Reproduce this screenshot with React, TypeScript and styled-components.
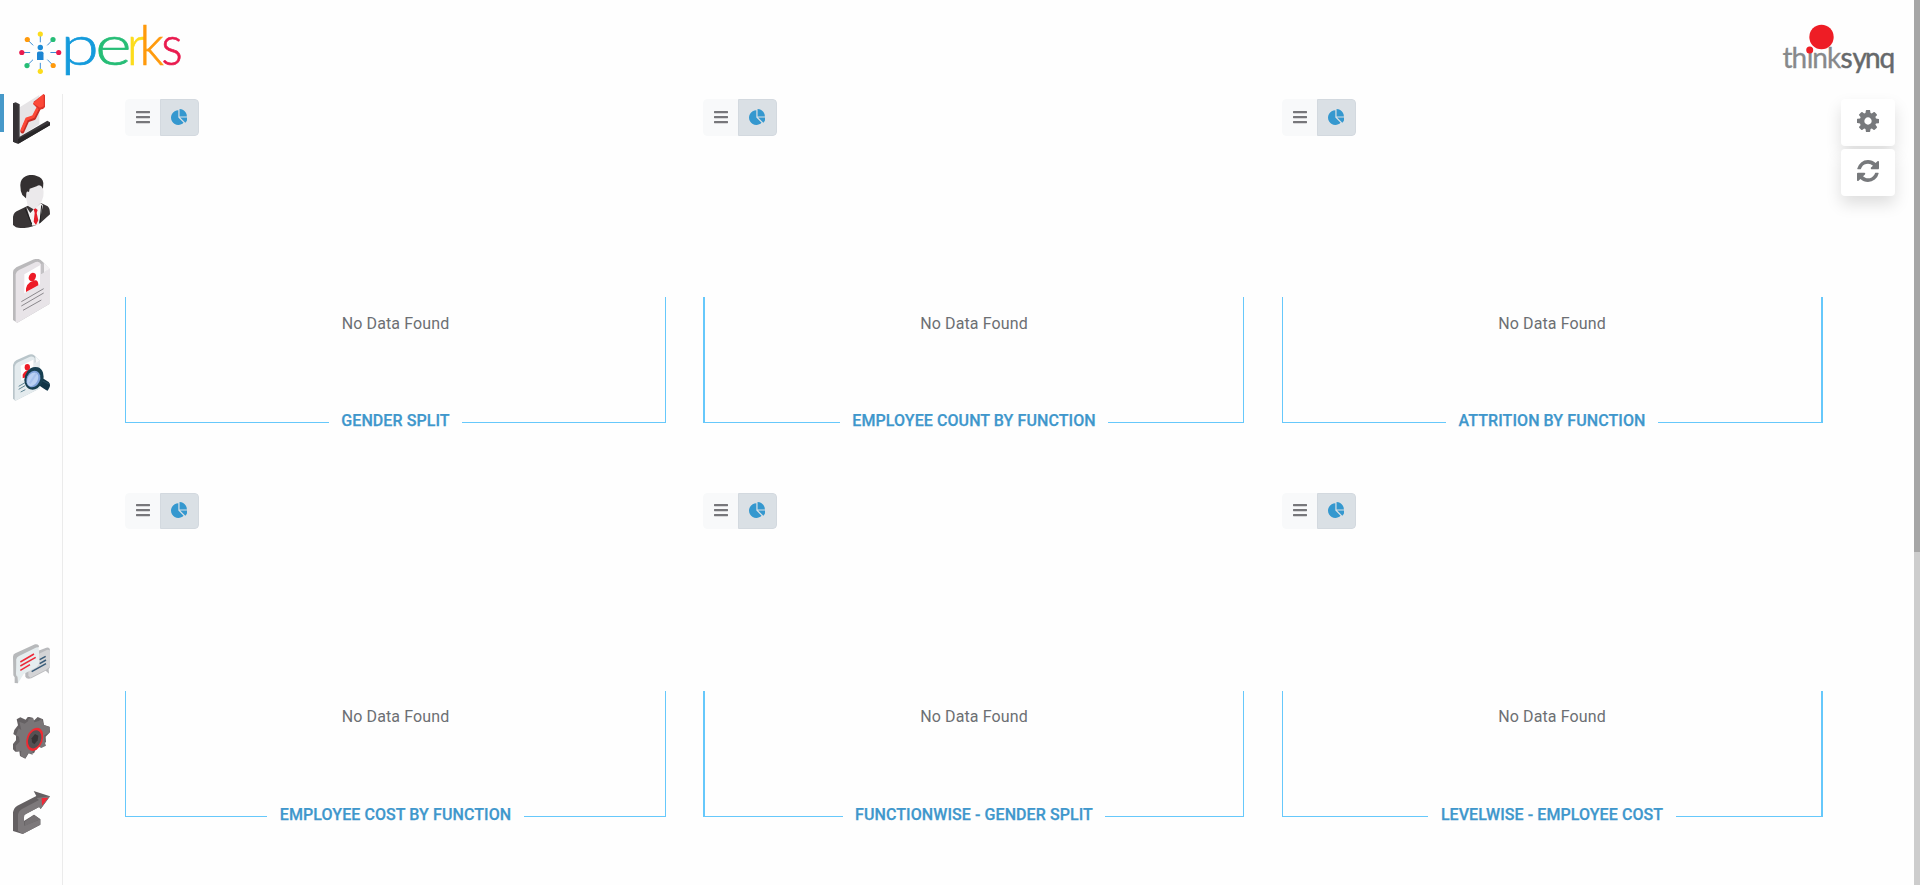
import React from 'react';
import styled, { createGlobalStyle } from 'styled-components';
import { FaBars } from 'react-icons/fa';

const GlobalStyle = createGlobalStyle`
  * { box-sizing: border-box; }
  body {
    margin: 0;
    background: #fefefe;
    font-family: Roboto, "Liberation Sans", sans-serif;
    font-size: 16px;
    color: #6c6f73;
    overflow: hidden;
  }
  svg { display: block; flex: none; }
`;

const Page = styled.div`
  display: flex;
  height: 885px;
`;

const Main = styled.div`
  flex: 1;
  display: flex;
  flex-direction: column;
  min-width: 0;
`;

const Header = styled.header`
  height: 94px;
  flex: none;
  display: flex;
  justify-content: space-between;
  padding: 0 16px;
`;

const Body = styled.div`
  flex: 1;
  display: flex;
  min-height: 0;
`;

const Sidebar = styled.nav`
  width: 63px;
  border-right: 1px solid #ebebeb;
  display: flex;
  flex-direction: column;
`;

const NavItem = styled.a<{ $gap: number; $active?: boolean }>`
  display: flex;
  gap: 9px;
  margin-top: ${(p) => p.$gap}px;
  padding-left: ${(p) => (p.$active ? 0 : 13)}px;
`;

const ActiveMark = styled.span`
  width: 4px;
  height: 38px;
  background: #4799c9;
`;

const Grid = styled.main`
  display: grid;
  grid-template-columns: 541px 542px 541px;
  grid-auto-rows: 324px;
  column-gap: 37px;
  row-gap: 70px;
  align-content: start;
  padding: 5px 0 0 62px;
`;

const Card = styled.section`
  width: 541px;
  display: flex;
  flex-direction: column;
`;

const Toggle = styled.div<{ $short?: boolean }>`
  display: flex;
  width: 74px;
  height: ${(p) => (p.$short ? 36 : 37)}px;
  margin-bottom: ${(p) => (p.$short ? 1 : 0)}px;
  border-radius: 4px;
  overflow: hidden;
`;

const ToggleButton = styled.button<{ $on?: boolean }>`
  display: flex;
  align-items: center;
  justify-content: center;
  flex: none;
  width: ${(p) => (p.$on ? 39 : 35)}px;
  padding: 0 ${(p) => (p.$on ? 1 : 0)}px 2px ${(p) => (p.$on ? 0 : 1)}px;
  border: 1px solid ${(p) => (p.$on ? '#d3d9df' : '#f8f9fa')};
  border-radius: ${(p) => (p.$on ? '0 4px 4px 0' : '4px 0 0 4px')};
  background: ${(p) => (p.$on ? '#dae0e5' : '#f8f9fa')};
  color: ${(p) => (p.$on ? '#3598cf' : '#77777b')};
  font-size: 16px;
`;

const Frame = styled.div<{ $left: number; $right: number }>`
  margin-top: 161px;
  height: 126px;
  display: flex;
  flex-direction: column;
  border: 0 solid #66c8fb;
  border-left-width: ${(p) => p.$left}px;
  border-right-width: ${(p) => p.$right}px;
`;

const Empty = styled.div<{ $raise?: boolean }>`
  padding-top: ${(p) => (p.$raise ? 16 : 17)}px;
  line-height: 20px;
  letter-spacing: 0.12px;
  text-align: center;
`;

const Title = styled.h2`
  margin: auto 0 -8px;
  height: 20px;
  display: flex;
  align-items: flex-start;
  gap: 12.5px;
  font-size: 16px;
  line-height: 20px;
  font-weight: 500;
  letter-spacing: 0.08px;
  -webkit-text-stroke: 0.25px #3f97cc;
  color: #3f97cc;
  text-transform: uppercase;
  white-space: nowrap;
  &::before,
  &::after {
    content: '';
    flex: 1;
    height: 1px;
    margin-top: 11px;
    background: #66c8fb;
  }
`;

const Tools = styled.div`
  margin-left: auto;
  padding: 5px 19px 0 0;
  display: flex;
  flex-direction: column;
  gap: 3px;
`;

const ToolButton = styled.button`
  width: 54px;
  height: 47px;
  padding: 0 0 3px;
  display: flex;
  align-items: center;
  justify-content: center;
  border: 0;
  border-radius: 4px;
  background: #fff;
  color: #77797c;
  box-shadow: 0 8px 16px rgba(0, 0, 0, 0.13);
`;

const ScrollTrack = styled.div`
  width: 6px;
  background: #cdcdcd;
`;

const ScrollThumb = styled.div`
  height: 552px;
  background: #a6a6a6;
`;

const PerksLetter = styled.text`
  font-family: Lato, sans-serif;
  font-weight: 300;
  font-size: 58px;
  stroke-width: 0.7px;
`;

const SynqText = styled.text<{ $strong?: boolean }>`
  font-family: Lato, sans-serif;
  font-size: 28px;
  font-weight: 400;
  fill: ${(p) => (p.$strong ? '#66696b' : '#87898b')};
  stroke: ${(p) => (p.$strong ? '#66696b' : '#87898b')};
  stroke-width: ${(p) => (p.$strong ? 0.5 : 0.3)}px;
`;

const spokes = [
  { x: 40.3, y: 34, c: '#fcdc1c' },
  { x: 53, y: 39.5, c: '#26bd76' },
  { x: 58.7, y: 52.5, c: '#e91a4e' },
  { x: 53.2, y: 65.5, c: '#ff9a0c' },
  { x: 40.3, y: 71.3, c: '#fcdc1c' },
  { x: 27, y: 65.6, c: '#26bd76' },
  { x: 21.8, y: 52.5, c: '#e91a4e' },
  { x: 27.3, y: 39.5, c: '#ff9a0c' },
];

const letters = [
  { ch: 'p', x: 60.4, sx: 1.2, c: '#159bdc' },
  { ch: 'e', x: 95.2, sx: 1.2, c: '#26bd76' },
  { ch: 'r', x: 126.5, sx: 0.95, c: '#fcdc1c' },
  { ch: 'k', x: 139.4, sx: 0.88, c: '#ff9a0c' },
  { ch: 's', x: 161.2, sx: 0.87, c: '#e91a4e' },
];

const PerksLogo = () => (
  <svg width="190" height="94" viewBox="16 0 190 94">
    {spokes.map((s, i) => (
      <g key={i}>
        <line
          x1={40.3 + (s.x - 40.3) * 0.55}
          y1={52.5 + (s.y - 52.5) * 0.55}
          x2={s.x}
          y2={s.y}
          stroke="#3d8fd6"
          strokeWidth="1"
        />
        <circle cx={s.x} cy={s.y} r="2.6" fill={s.c} />
      </g>
    ))}
    <circle cx="40.3" cy="47.5" r="2.7" fill="#1d8bd6" />
    <path d="M37 60V53.2q0-1.8 1.8-1.8h3q1.7 0 1.7 1.8V60z" fill="#1d86d3" />
    {letters.map((l) => (
      <PerksLetter key={l.ch} transform={`translate(${l.x} 65.3) scale(${l.sx} 0.96)`} fill={l.c} stroke={l.c}>
        {l.ch}
      </PerksLetter>
    ))}
  </svg>
);

const ThinksynqLogo = () => (
  <svg width="120" height="94" viewBox="1778 0 120 94">
    <SynqText y="68" x="1782.5 1791.5 1806.7 1812.3 1827">think</SynqText>
    <SynqText $strong y="68" x="1840.5 1852.5 1865 1879.5">synq</SynqText>
    <circle cx="1821.5" cy="37" r="12.2" fill="#ee1d25" />
    <circle cx="1809.7" cy="50" r="3.5" fill="#ee1d25" />
  </svg>
);

const PieIcon = () => (
  <svg width="16.5" height="16" viewBox="0 0 1728 1664" fill="currentColor">
    <path d="M768 890l546 546q-106 108-247.500 168T768 1664q-209 0-385.500-103T103 1281.500 0 896t103-385.500T382.500 231 768 128v762zm187 6h773q0 157-60 298.500T1500 1442zm709-128H896V0q209 0 385.500 103T1561 382.500 1664 768z" />
  </svg>
);

const CogIcon = () => (
  <svg width="22" height="22" viewBox="0 0 1536 1536" fill="currentColor">
    <path d="M1024 768q0-106-75-181t-181-75-181 75-75 181 75 181 181 75 181-75 75-181zm512-109v222q0 12-8 23t-20 13l-185 28q-19 54-39 91 35 50 107 138 10 12 10 25t-9 23q-27 37-99 108t-94 71q-12 0-26-9l-138-108q-44 23-91 38-16 136-29 186-7 28-36 28H657q-14 0-24.500-8.500T621 1506l-28-184q-49-16-90-37l-141 107q-10 9-25 9-14 0-25-11-126-114-165-168-7-10-7-23 0-12 8-23 15-21 51-66.500t54-70.500q-27-50-41-99L29 913q-13-2-21-12.500T0 877V655q0-12 8-23t19-13l186-28q14-46 39-92-40-57-107-138-10-12-10-24 0-10 9-23 26-36 98.500-107.500T337 135q13 0 26 10l138 107q44-23 91-38 16-136 29-186 7-28 36-28h222q14 0 24.500 8.500T915 30l28 184q49 16 90 37l142-107q9-9 24-9 13 0 25 10 129 119 165 170 7 8 7 22 0 12-8 23-15 21-51 66.500t-54 70.500q26 50 41 98l183 28q13 2 21 12.500t8 23.500z" />
  </svg>
);

const RefreshIcon = () => (
  <svg width="22" height="22" viewBox="0 0 1536 1536" fill="currentColor">
    <path d="M1511 928q0 5-1 7-64 268-268 434.500T764 1536q-146 0-282.500-55T238 1324l-129 129q-19 19-45 19t-45-19-19-45V960q0-26 19-45t45-19h448q26 0 45 19t19 45-19 45l-137 137q71 66 161 102t187 36q134 0 250-65t186-179q11-17 53-117 8-23 30-23h192q13 0 22.500 9.500t9.500 22.500zm25-800v448q0 26-19 45t-45 19h-448q-26 0-45-19t-19-45 19-45l138-138Q969 256 768 256q-134 0-250 65T332 500q-11 17-53 117-8 23-30 23H50q-13 0-22.500-9.500T18 608v-7q65-268 270-434.500T768 0q146 0 284 55.500T1297 212l130-129q19-19 45-19t45 19 19 45z" />
  </svg>
);

const ChartIcon = () => (
  <svg width="37" height="50" viewBox="39 27 111 150">
    <path d="M59 67L118 30V118L59 155z" fill="#e6e4e6" />
    <path d="M39 55L47 52L59 58V155L142 107L150 112V121L55 176L39 170z" fill="#3b383b" />
    <path d="M39 55L53 62V176L39 170z" fill="#343134" />
    <path d="M54 162L150 113V121L55 176z" fill="#282628" />
    <path d="M67 139L82 106L102 99L118 67" fill="none" stroke="#c52c25" strokeWidth="12" strokeLinejoin="round" strokeLinecap="round" />
    <path d="M66 135L80 102L100 95L117 62" fill="none" stroke="#fc4938" strokeWidth="9" strokeLinejoin="round" strokeLinecap="round" />
    <path d="M99 57L103 49L131 27L135 31V66L129 72L117 74z" fill="#db3329" />
    <path d="M99 55L131 27V64L120 68z" fill="#fc4938" />
  </svg>
);

const PersonIcon = () => (
  <svg width="37" height="53" viewBox="39 270 111 159">
    <path d="M39 420V395Q42 380 56 376L82 363L123 354L143 364Q150 369 150 388L121 414Q82 435 48 427z" fill="#393536" />
    <path d="M79 366L91 384L101 373L122 354L129 361L116 419L97 422z" fill="#f4f3f4" />
    <path d="M68 315Q74 302 90 298L120 287Q133 303 130 334Q127 349 119 357L103 374L83 362L79 342Q68 333 68 315z" fill="#ebe9eb" />
    <path d="M101 373L107 370L113 375L110 384L115 406L108 420L101 410L104 384z" fill="#e51e2a" />
    <path d="M61 302Q60 283 77 274Q91 266 110 273Q128 278 130 294L129 311Q121 295 110 304L89 311L87 321Q81 317 79 324L78 340L67 330Q61 320 61 302z" fill="#343031" />
    <path d="M75 370L95 417M125 361L120 412" stroke="#1f1d1e" strokeWidth="3" />
  </svg>
);

const ResumeIcon = () => (
  <svg width="37" height="64" viewBox="39 42 111 192">
    <path d="M39 225V82Q40 73 49 67L102 43Q114 39 122 45L131 53L148 71V177L52 233Z" fill="#bab9bb" />
    <path d="M47 231V88Q49 79 57 75L107 51Q119 47 123 58V87L150 70L148 177L52 233z" fill="#e8e4e8" />
    <path d="M131 53L150 71L132 82z" fill="#f4f2f4" />
    <path d="M123 58L131 53V83L123 87z" fill="#c4c2c5" />
    <path d="M73 88L120 61V118L73 145z" fill="#fff" />
    <ellipse cx="97" cy="96" rx="10" ry="13" transform="rotate(25 97 96)" fill="#ed1c27" />
    <path d="M78 141V130Q80 119 90 112L104 106Q115 104 115 121z" fill="#ed1c27" />
    <path d="M64 170L131 131M64 183L131 144M69 196L124 165" stroke="#777579" strokeWidth="2.5" />
  </svg>
);

const SearchIcon = () => (
  <svg width="37" height="47" viewBox="39 327 111 141">
    <path d="M39 461V360Q40 351 49 346L86 329Q96 325 104 332L120 347V430L46 467z" fill="#b9c5ca" />
    <path d="M44 464V365Q46 356 54 352L90 335Q100 332 104 340V353L120 347V430L46 467z" fill="#e4ebee" />
    <path d="M106 334L120 347L107 354z" fill="#f5f8f9" />
    <path d="M62 362L100 344V390L64 407z" fill="#fff" />
    <ellipse cx="82" cy="367" rx="8" ry="10" fill="#ed1c27" />
    <path d="M68 400V389Q75 375 90 376V393z" fill="#ed1c27" />
    <path d="M56 424L75 413M56 433L75 422M62 441L76 434" stroke="#477283" strokeWidth="2.5" />
    <path d="M119 404L127 399L146 411Q152 417 149 426L143 437Q137 436 116 420z" fill="#123648" />
    <path d="M122 405L148 417" stroke="#2a5063" strokeWidth="3" />
    <ellipse cx="102" cy="400" rx="28" ry="35" transform="rotate(20 102 400)" fill="#173f51" />
    <ellipse cx="100" cy="402" rx="20" ry="26" transform="rotate(25 100 402)" fill="#82a4dc" />
    <ellipse cx="98" cy="403" rx="15" ry="22" transform="rotate(30 98 403)" fill="#bad0f3" />
    <path d="M89 415L109 386" stroke="#a8c2ee" strokeWidth="6" />
  </svg>
);

const MessagesIcon = () => (
  <svg width="37" height="40" viewBox="39 42 111 120">
    <path d="M75 77L139 53Q149 50 150 61V111L146 118L147 131L137 122L94 145Q80 149 76 140z" fill="#b9babd" />
    <path d="M86 86L142 59L150 61V110L138 119L91 143L85 137z" fill="#d4d4d6" />
    <path d="M95 125L138 101M119 101L138 90M119 89L137 79" stroke="#385b78" strokeWidth="4.5" />
    <path d="M39 80Q39 73 46 70L105 43Q112 41 116 46L117 51L50 87L54 160L44 159V142L40 136z" fill="#b7b9bb" />
    <path d="M49 88Q49 82 57 78L107 53Q117 49 117 60V99Q117 107 109 112L71 132L54 160V140Q48 140 48 132z" fill="#e6edef" />
    <path d="M61 96L102 72M61 108L107 82M61 121L90 104" stroke="#ed2938" strokeWidth="4.5" />
  </svg>
);

const GearIcon = () => (
  <svg width="37" height="42" viewBox="39 36 111 126">
    <path d="M50 43L61 37L77 44L84 35L98 38L101 47L113 36L129 43L132 60L149 65L150 82L137 95L138 111L125 123L112 124L102 145L87 143L76 161L60 153L58 139L46 140L39 133V117L48 106V92L40 87L43 75L54 61z" fill="#656163" />
    <path d="M58 50L74 56L84 49L86 41L100 40L103 52L116 48L125 42L132 60L149 67L147 84L133 91L134 110L138 122L124 129L111 123L98 132V149L84 145L76 160L62 152L64 137L49 140L47 122L59 110L57 95L48 91L56 70L64 75z" fill="#797577" />
    <ellipse cx="104" cy="103" rx="24" ry="36" transform="rotate(20 104 103)" fill="#f02a32" />
    <ellipse cx="104" cy="103" rx="19" ry="28" transform="rotate(20 104 103)" fill="#555153" />
    <path d="M95 100L105 87L115 92L113 106L103 118L96 112z" fill="#373435" />
  </svg>
);

const ExitIcon = () => (
  <svg width="37" height="43" viewBox="39 258 111 129">
    <path d="M39 322Q41 309 52 302L109 273L101 258L150 274L122 312L117 306L73 329L68 334V350L102 329L121 343V359L68 387L39 378z" fill="#646062" />
    <path d="M54 378V330Q55 318 66 312L117 285L110 279L150 274L122 312L119 305L78 327Q72 330 72 337V362L121 343V359L68 387z" fill="#7d797b" />
    <path d="M102 329L121 343L74 363V350z" fill="#767274" />
    <path d="M125 279L145 278L126 302z" fill="#f02a38" />
  </svg>
);

const navItems = [
  { Icon: ChartIcon, gap: 0, active: true },
  { Icon: PersonIcon, gap: 31 },
  { Icon: ResumeIcon, gap: 31 },
  { Icon: SearchIcon, gap: 31 },
  { Icon: MessagesIcon, gap: 243 },
  { Icon: GearIcon, gap: 33 },
  { Icon: ExitIcon, gap: 32 },
];

const charts = [
  { title: 'Gender Split', left: 1, right: 1 },
  { title: 'Employee Count By Function', left: 2, right: 1 },
  { title: 'Attrition By Function', left: 1, right: 2 },
  { title: 'Employee Cost By Function', left: 1, right: 1 },
  { title: 'Functionwise - Gender Split', left: 2, right: 1 },
  { title: 'Levelwise - Employee Cost', left: 1, right: 2 },
];

export default function App() {
  return (
    <Page>
      <GlobalStyle />
      <Main>
        <Header>
          <PerksLogo />
          <ThinksynqLogo />
        </Header>
        <Body>
          <Sidebar>
            {navItems.map(({ Icon, gap, active }, i) => (
              <NavItem key={i} $gap={gap} $active={active}>
                {active && <ActiveMark />}
                <Icon />
              </NavItem>
            ))}
          </Sidebar>
          <Grid>
            {charts.map((c, i) => (
              <Card key={c.title}>
                <Toggle $short={i > 2}>
                  <ToggleButton>
                    <FaBars />
                  </ToggleButton>
                  <ToggleButton $on>
                    <PieIcon />
                  </ToggleButton>
                </Toggle>
                <Frame $left={c.left} $right={c.right}>
                  <Empty $raise={i > 2}>No Data Found</Empty>
                  <Title>{c.title}</Title>
                </Frame>
              </Card>
            ))}
          </Grid>
          <Tools>
            <ToolButton>
              <CogIcon />
            </ToolButton>
            <ToolButton>
              <RefreshIcon />
            </ToolButton>
          </Tools>
        </Body>
      </Main>
      <ScrollTrack>
        <ScrollThumb />
      </ScrollTrack>
    </Page>
  );
}
